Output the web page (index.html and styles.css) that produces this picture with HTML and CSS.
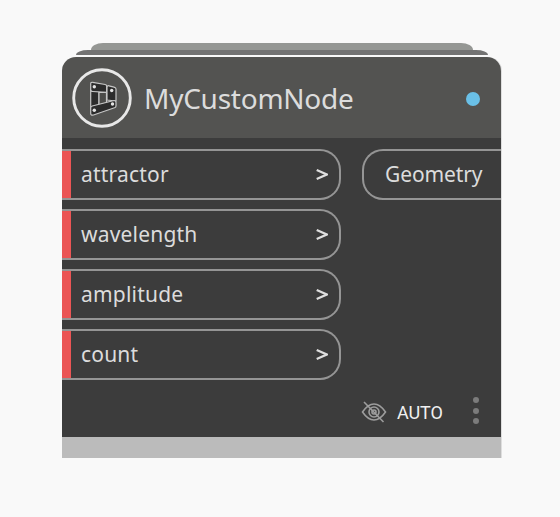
FILE: index.html
```html
<!DOCTYPE html>
<html lang="en">
<head>
<meta charset="utf-8">
<title>MyCustomNode</title>
<link rel="stylesheet" href="styles.css">
</head>
<body>
<main class="stack">
  <div class="layer layer-back"></div>
  <div class="layer layer-middle"></div>
  <article class="node">
    <header class="header">
      <svg class="node-icon" viewBox="0 0 60 60">
        <circle cx="30" cy="30" r="28.3" fill="none" stroke="#e8e8e8" stroke-width="2.9"/>
        <g fill="#2c2c2c" stroke="#c6c6c6" stroke-width="1.2" stroke-linejoin="round">
          <path d="M18.700 22v19l8.300-3V23z"/>
          <path d="M27 24.500h7.500v10.500l-7.500 2z" fill="#4b4b49"/>
          <path d="M18.700 16q0-2 2-1.700l12.500 2.200q1.500.3 1.500 1.800v6l-14-.8q-2 0-2-2z"/>
          <path d="M35 19.300q0-2 2-1.500l5 1.300q2 .5 2 2v11.900l-9-1z"/>
          <path d="M18.700 40q0-1.500 1.500-2L42 32.500q2 0 2 2v3.500q0 1.200-1.500 1.800L21.500 47q-2.800.7-2.800-1.500z"/>
        </g>
        <g fill="#e4e4e4"><circle cx="22.300" cy="18.800" r="1.700"/><circle cx="39.700" cy="22.500" r="1.700"/><circle cx="22.300" cy="42.300" r="1.700"/><circle cx="40.500" cy="36" r="1.700"/></g>
      </svg>
      <h1 class="title">MyCustomNode</h1>
      <span class="status"></span>
    </header>
    <section class="body">
      <div class="ports">
        <div class="inputs">
          <div class="input"><span>attractor</span><svg class="chevron" viewBox="0 0 12 12"><path d="M.7 1L10.800 5.500L.7 10"/></svg></div>
          <div class="input"><span>wavelength</span><svg class="chevron" viewBox="0 0 12 12"><path d="M.7 1L10.800 5.500L.7 10"/></svg></div>
          <div class="input"><span>amplitude</span><svg class="chevron" viewBox="0 0 12 12"><path d="M.7 1L10.800 5.500L.7 10"/></svg></div>
          <div class="input"><span>count</span><svg class="chevron" viewBox="0 0 12 12"><path d="M.7 1L10.800 5.500L.7 10"/></svg></div>
        </div>
        <div class="output"><span>Geometry</span></div>
      </div>
      <div class="controls">
        <svg class="eye" viewBox="0 0 26 22"><path d="M1.500 11Q7 3 13 3t11.500 8Q19 19 13 19T1.500 11z"/><circle cx="13" cy="11" r="5"/><circle cx="13" cy="11" r="2"/><path d="M3 1l19.500 20"/></svg>
        <span class="auto">AUTO</span>
        <span class="menu"><i></i><i></i><i></i></span>
      </div>
    </section>
    <footer class="footer"></footer>
  </article>
</main>
</body>
</html>
```
FILE: styles.css
```css
* { box-sizing: border-box; }
body {
  margin: 0;
  height: 517px;
  background: #f9f9f9;
  color: #dcdcdc;
  font-family: "Noto Sans", sans-serif;
  overflow: hidden;
}
.stack {
  width: 439px;
  margin-left: 62px;
  padding-top: 43px;
  display: flex;
  flex-direction: column;
  align-items: center;
}
.layer-back {
  width: 382px;
  height: 7px;
  background: #959794;
  border-radius: 12px 12px 0 0 / 7px 7px 0 0;
}
.layer-middle {
  width: 412px;
  height: 5px;
  margin-bottom: 2px;
  background: #737373;
  border-radius: 12px 12px 0 0 / 5px 5px 0 0;
}
.node {
  width: 439px;
  border-radius: 14px 14px 0 0;
  overflow: hidden;
  box-shadow: 1px 0 0 #dedede;
}
.header {
  height: 81px;
  padding: 0 21px 0 10px;
  display: flex;
  align-items: center;
  background: #535351;
}
.node-icon { width: 60px; height: 60px; flex: none; }
.title {
  margin: 0 0 0 12px;
  font-size: 28px;
  line-height: 40px;
  font-weight: 400;
  white-space: nowrap;
  letter-spacing: -.25px;
}
.status {
  width: 14px;
  height: 14px;
  margin: 2px 0 0 auto;
  border-radius: 50%;
  background: #6ac0e7;
}
.body { height: 299px; background: #3c3c3c; }
.ports {
  height: 242px;
  padding-top: 11px;
  display: flex;
  justify-content: space-between;
  align-items: flex-start;
}
.inputs { display: grid; gap: 9px; }
.input {
  width: 279px;
  height: 51px;
  padding: 0 11px 0 0;
  display: flex;
  align-items: center;
  border: 2px solid #959595;
  border-left: 0;
  border-radius: 0 21px 21px 0;
  font-size: 21px;
  line-height: 28px;
  letter-spacing: .2px;
}
.input::before {
  content: "";
  align-self: stretch;
  margin-right: 10px;
  width: 9px;
  background: #eb5555;
}
.input span { margin-right: auto; padding-bottom: 2px; }
.chevron { width: 12px; height: 12px; fill: none; stroke: #dedede; stroke-width: 2.200; }
.output {
  width: 139px;
  height: 51px;
  padding: 0 0 2px 21px;
  display: flex;
  align-items: center;
  border: 2px solid #959595;
  border-right: 0;
  border-radius: 21px 0 0 21px;
  font-size: 21px;
  letter-spacing: -.1px;
}
.controls {
  height: 57px;
  padding: 6px 22px 0 299px;
  display: flex;
  align-items: center;
}
.eye { width: 26px; height: 22px; flex: none; fill: none; stroke: #9d9d9d; stroke-width: 1.600; }
.auto { margin: 2px 0 0 10px; color: #f0f0f0; font-family: Roboto, sans-serif; font-size: 18px; line-height: 24px; letter-spacing: -.1px; }
.menu { margin: -2px 0 0 auto; display: grid; gap: 4.500px; }
.menu i { width: 6px; height: 6px; border-radius: 50%; background: #7c7c7c; }
.footer { height: 21px; background: #bbb; }
```
